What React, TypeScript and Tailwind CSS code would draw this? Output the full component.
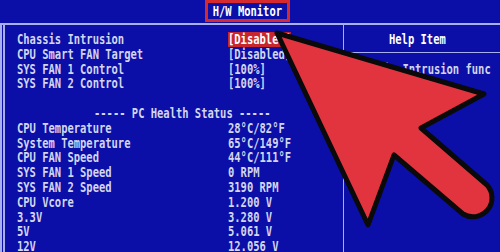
import React from 'react';

const setup = [
  { label: 'Chassis Intrusion', value: '[Disabled]', active: true },
  { label: 'CPU Smart FAN Target', value: '[Disabled]' },
  { label: 'SYS FAN 1 Control', value: '[100%]' },
  { label: 'SYS FAN 2 Control', value: '[100%]' },
];

const health = [
  { label: 'CPU Temperature', value: '28°C/82°F' },
  { label: 'System Temperature', value: '65°C/149°F' },
  { label: 'CPU FAN Speed', value: '44°C/111°F' },
  { label: 'SYS FAN 1 Speed', value: '0 RPM' },
  { label: 'SYS FAN 2 Speed', value: '3190 RPM' },
  { label: 'CPU Vcore', value: '1.200 V' },
  { label: '3.3V', value: '3.280 V' },
  { label: '5V', value: '5.061 V' },
  { label: '12V', value: '12.056 V' },
];

// bios glyphs are tall and narrow, so squeeze a mono font sideways
const T = ({ children, className = '' }: { children: React.ReactNode; className?: string }) => (
  <span className={`inline-block origin-left scale-x-[0.748] whitespace-pre ${className}`}>{children}</span>
);

const Row = ({ label, value, active }: { label: string; value: string; active?: boolean }) => (
  <div className="flex h-[14.8px] items-center">
    <div className="w-[211px] shrink-0">
      <T>{label}</T>
    </div>
    <T className={active ? 'bg-[#c8262e] text-white' : ''}>{value}</T>
  </div>
);

export default function App() {
  return (
    <div className="relative w-[500px] h-[252px] overflow-hidden bg-[#0b0fa8] font-['DejaVu_Sans_Mono',monospace] font-bold text-[14px] leading-[14.8px] text-[#d2d6ee]">
      {/* Tab bar */}
      <div className="flex h-[23px] pl-[205px]">
        <div className="w-[85px] h-[22px] border-[3px] border-[#d42a30] flex items-center justify-center text-white">
          <span className="inline-block origin-center scale-x-[0.748] whitespace-pre">H/W Monitor</span>
        </div>
      </div>

      {/* Main frame */}
      <div className="flex h-[229px] border-t-2 border-[#a8b0ec]">
        <div className="w-[344px] shrink-0 border-l-[5px] border-double border-r border-[#a8b0ec] pl-[12px] pt-[7px]">
          {setup.map((r) => (
            <Row key={r.label} {...r} />
          ))}
          <div className="h-[14.8px]" />
          <div className="h-[14.8px] flex items-center pl-[77px]">
            <T>----- PC Health Status -----</T>
          </div>
          {health.map((r) => (
            <Row key={r.label} {...r} />
          ))}
        </div>

        <div className="flex-1">
          <div className="h-[28px] border-b border-[#a8b0ec] flex items-center pl-[45px] pt-[2px] text-white">
            <T>Help Item</T>
          </div>
          <div className="pl-[8px] pt-[9px]">
            <T>Chassis Intrusion func</T>
          </div>
        </div>
      </div>

      {/* Red pointer arrow overlay */}
      <svg className="absolute inset-0 pointer-events-none" width="500" height="252" viewBox="0 0 500 252">
        <path
          d="M277 33 L484 94 L421 128 L487 185 A19 19 0 0 1 463 214 L394 155 L368 225 Z"
          fill="#e2343f"
          stroke="#0a0a0a"
          strokeWidth="5"
          strokeLinejoin="round"
        />
      </svg>
    </div>
  );
}
